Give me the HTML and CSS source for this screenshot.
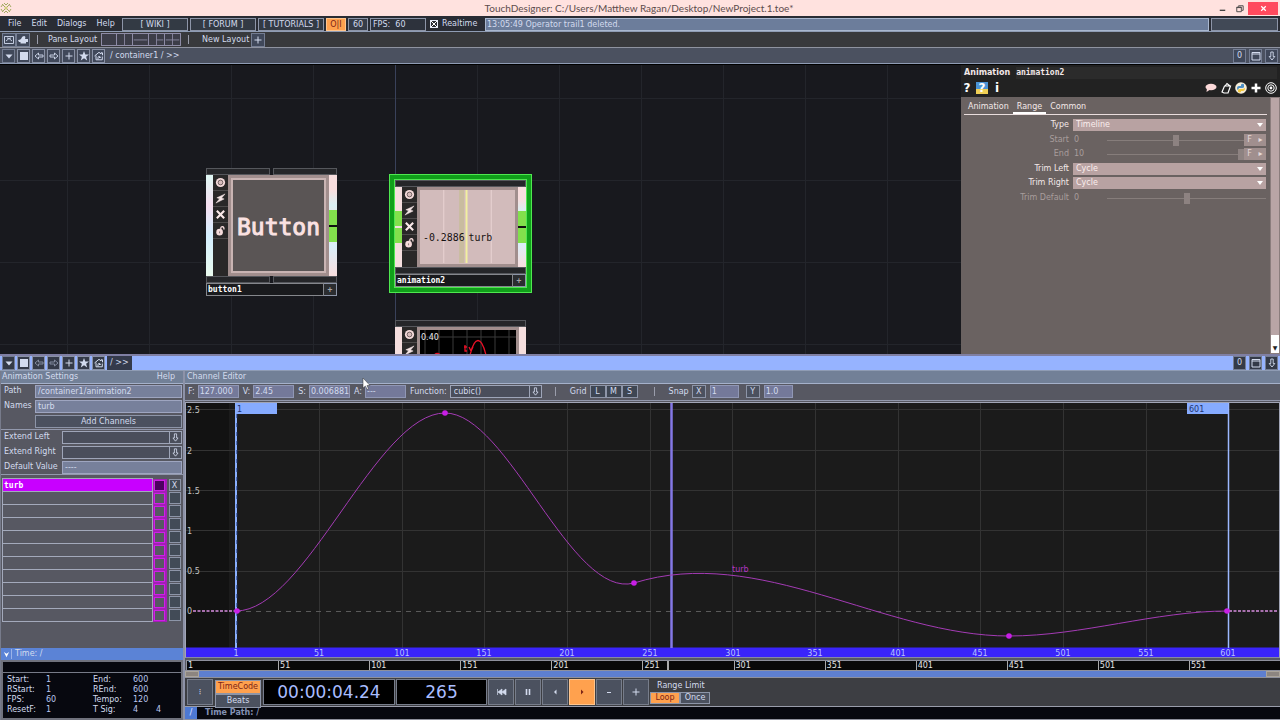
FILE: index.html
```html
<!DOCTYPE html>
<html lang="en">
<head>
    <meta charset="UTF-8">
    <meta name="viewport" content="width=device-width, initial-scale=1.0">
    <title>TouchDesigner: C:/Users/Matthew Ragan/Desktop/NewProject.1.toe*</title>
    <link rel="stylesheet" href="styles.css">
</head>
<body>
    <!-- shared icons -->
    <svg class="defs" width="0" height="0" aria-hidden="true">
        <symbol id="i-menu" viewBox="0 0 12 12"><path d="M2.500 4.500h7L6 8.500z" fill="currentColor"/></symbol>
        <symbol id="i-stop" viewBox="0 0 12 12"><path d="M2 2h8v8H2z" fill="currentColor"/></symbol>
        <symbol id="i-back" viewBox="0 0 12 12"><path d="M2 6l3.500-3v2H10v2H5.500v2z" fill="none" stroke="currentColor" stroke-width=".9"/></symbol>
        <symbol id="i-fwd" viewBox="0 0 12 12"><path d="M10 6L6.500 3v2H2v2h4.500v2z" fill="none" stroke="currentColor" stroke-width=".9"/></symbol>
        <symbol id="i-plus" viewBox="0 0 12 12"><path d="M6 2.500v7M2.500 6h7" stroke="currentColor" stroke-width="1"/></symbol>
        <symbol id="i-star" viewBox="0 0 12 12"><path d="M6 1l1.300 3.500H11L8.100 6.800 9.200 10.500 6 8.300 2.800 10.500 3.900 6.800 1 4.500h3.700z" fill="currentColor"/></symbol>
        <symbol id="i-home" viewBox="0 0 12 12"><path d="M1.500 6L6 2.300 8 4V2.800h1.500v2.500M3 5.500v4.300h6.300V6.500M5 9.500V7.500q0-1 1.200-1T7.500 7.500H6" fill="none" stroke="currentColor" stroke-width="1"/></symbol>
        <symbol id="i-max" viewBox="0 0 12 12"><path d="M2 2.500h8v7.500H2zM2 4h8" fill="none" stroke="currentColor" stroke-width="1"/></symbol>
        <symbol id="i-down" viewBox="0 0 12 12"><path d="M4.800 2h2.400v4.500h1.600L6 10 3.200 6.500h1.600z" fill="none" stroke="currentColor" stroke-width=".9"/></symbol>
        <symbol id="f-view" viewBox="0 0 12 12"><circle cx="6" cy="6" r="5" fill="#f6dcdc"/><circle cx="6" cy="6" r="2.600" fill="#d7bcbc" stroke="#4a3f3f" stroke-width=".8"/></symbol>
        <symbol id="f-cook" viewBox="0 0 12 12"><path d="M11 1L2 5.200 5 6.300 1 11 10 6.500 7.200 5.400z" fill="#f6e6e6" stroke="#f6e6e6" stroke-width=".5"/></symbol>
        <symbol id="f-bypass" viewBox="0 0 12 12"><path d="M2 2l8 8M10 2l-8 8" stroke="#fbeaea" stroke-width="2.300"/></symbol>
        <symbol id="f-lock" viewBox="0 0 12 12"><circle cx="5" cy="7.800" r="3.600" fill="#f6dcdc"/><path d="M6.300 5V3.500q.2-1.800 1.900-1.600T9.800 5" fill="none" stroke="#f6dcdc" stroke-width="1.400"/><path d="M5 7v2" stroke="#4a3f3f" stroke-width=".7"/></symbol>
    </svg>

    <header class="titlebar">
        <svg class="logo" viewBox="0 0 12 12"><path d="M2 2l3 3M10 2L7 5M2 10l3-3M10 10L7 7M1 5l2-3M9 2l2 3M1 7l2 3M9 10l2-3M4 1l2 2 2-2M4 11l2-2 2 2" stroke="#a3aa62" fill="none"/><circle cx="6" cy="6" r="1.500" fill="#d0cf7a"/></svg>
        <h1>TouchDesigner: C:/Users/Matthew Ragan/Desktop/NewProject.1.toe*</h1>
        <div class="window-buttons">
            <button aria-label="Minimize"><svg viewBox="0 0 12 12"><path d="M3 8h6" stroke="#444" stroke-width="1.500"/></svg></button>
            <button aria-label="Restore"><svg viewBox="0 0 12 12"><path d="M3 4.500h5v5H3zM3 5h5M5 4V3h5v5H8.500" fill="none" stroke="#444"/></svg></button>
            <button class="close" aria-label="Close"><svg viewBox="0 0 12 12"><path d="M3.500 3.500l5 5M8.500 3.500l-5 5" stroke="#fff" stroke-width="1.300"/></svg></button>
        </div>
    </header>

    <nav class="menubar">
        <div class="menus">
            <a href="#">File</a>
            <a href="#">Edit</a>
            <a href="#">Dialogs</a>
            <a href="#">Help</a>
        </div>
        <button class="link-btn">[ WIKI ]</button>
        <button class="link-btn">[ FORUM ]</button>
        <button class="link-btn">[ TUTORIALS ]</button>
        <button class="small-btn on">O|I</button>
        <button class="small-btn">60</button>
        <span class="fps">FPS:&nbsp; 60</span>
        <label class="realtime"><input type="checkbox" checked> Realtime</label>
        <output class="log">13:05:49 Operator trail1 deleted.</output>
        <span class="log-end"></span>
    </nav>

    <div class="layoutbar">
        <button class="icon" aria-label="Browser"><svg viewBox="0 0 12 12"><path d="M1.500 2.500h9v7h-9zM3 7l3-2.500L9 7M6 4.500L4 4M6 4.500L8 4" fill="none" stroke="currentColor" stroke-width=".9"/></svg></button>
        <button class="icon" aria-label="Render"><svg viewBox="0 0 12 12"><path d="M1 6q2 0 3-1 1-3 3-3t1 3h3v3H9v1.500H3.500V8H2z" fill="currentColor"/></svg></button>
        <span class="bar"></span>
        <span>Pane Layout</span>
        <div class="layouts">
            <button aria-label="Single"><svg viewBox="0 0 16 13"></svg></button>
            <button aria-label="Split vertical"><svg viewBox="0 0 16 13"><path d="M8 0v13"/></svg></button>
            <button aria-label="Split horizontal"><svg viewBox="0 0 16 13"><path d="M0 7h16"/></svg></button>
            <button aria-label="Split right"><svg viewBox="0 0 16 13"><path d="M8 0v13M8 7h8"/></svg></button>
            <button aria-label="Quad"><svg viewBox="0 0 16 13"><path d="M8 0v13M0 7h16"/></svg></button>
        </div>
        <span class="bar"></span>
        <span>New Layout</span>
        <button class="icon" aria-label="Add layout"><svg><use href="#i-plus"/></svg></button>
    </div>

    <div class="pathbar">
        <button class="icon" aria-label="Pane type"><svg><use href="#i-menu"/></svg></button>
        <button class="icon" aria-label="Stop"><svg><use href="#i-stop"/></svg></button>
        <button class="icon" aria-label="Back"><svg><use href="#i-back"/></svg></button>
        <button class="icon" aria-label="Forward"><svg><use href="#i-fwd"/></svg></button>
        <button class="icon" aria-label="Add"><svg><use href="#i-plus"/></svg></button>
        <button class="icon" aria-label="Bookmark"><svg><use href="#i-star"/></svg></button>
        <button class="icon" aria-label="Home"><svg><use href="#i-home"/></svg></button>
        <span class="path">/ container1 / &gt;&gt;</span>
        <div class="path-end">
            <button class="icon">0</button>
            <button class="icon" aria-label="Maximize"><svg><use href="#i-max"/></svg></button>
            <button class="icon" aria-label="Split"><svg><use href="#i-down"/></svg></button>
        </div>
    </div>

    <main class="workspace">
        <section class="network">
            <div class="node node-button">
                <div class="tabs"><i></i><i></i></div>
                <div class="node-body">
                    <div class="port"></div>
                    <div class="flags">
                        <svg><use href="#f-view"/></svg>
                        <svg><use href="#f-cook"/></svg>
                        <svg><use href="#f-bypass"/></svg>
                        <svg><use href="#f-lock"/></svg>
                    </div>
                    <div class="viewer button-viewer">Button</div>
                    <div class="port out"><i></i><i></i></div>
                </div>
                <div class="tabs"><i></i><i></i></div>
                <div class="name"><span>button1</span><button aria-label="Activate">+</button></div>
            </div>

            <div class="node node-anim selected">
                <div class="tabs"><i></i></div>
                <div class="node-body">
                    <div class="port in"><i></i><i></i></div>
                    <div class="flags">
                        <svg><use href="#f-view"/></svg>
                        <svg><use href="#f-cook"/></svg>
                        <svg><use href="#f-bypass"/></svg>
                        <svg><use href="#f-lock"/></svg>
                    </div>
                    <div class="viewer anim-viewer">
                        <svg viewBox="0 0 96 74">
                            <path d="M24 0v74M72 0v74" stroke="#ead3d3"/>
                            <path d="M42 0v74" stroke="#c4bd8e" stroke-width="5" opacity=".6"/>
                            <path d="M47 0v74" stroke="#f2f0a0" stroke-width="2"/>
                            <text x="3" y="52">-0.2886</text>
                            <text x="49" y="52">turb</text>
                        </svg>
                    </div>
                    <div class="port out"><i></i><i></i></div>
                </div>
                <div class="tabs"><i></i></div>
                <div class="name"><span>animation2</span><button aria-label="Activate">+</button></div>
            </div>

            <div class="node node-trail">
                <div class="tabs"><i></i></div>
                <div class="node-body">
                    <div class="port"></div>
                    <div class="flags">
                        <svg><use href="#f-view"/></svg>
                        <svg><use href="#f-cook"/></svg>
                        <svg><use href="#f-bypass"/></svg>
                        <svg><use href="#f-lock"/></svg>
                    </div>
                    <div class="viewer trail-viewer">
                        <svg viewBox="0 0 96 74">
                            <path d="M5 0v74M19 0v74M33 0v74M47 0v74M61 0v74M75 0v74M89 0v74M0 7h96" stroke="#3a3a3a"/>
                            <path d="M12 28Q17 19 23 28M49 30C54 4 62 4 67 30M45 15v6h2M44 17h3M49 17l2 4 2-4" fill="none" stroke="#e81026" stroke-width="1.300"/>
                            <text x="1" y="10">0.40</text>
                        </svg>
                    </div>
                    <div class="port"></div>
                </div>
            </div>
        </section>

        <aside class="params">
            <div class="params-head">
                <div class="op-title"><strong>Animation</strong><span>animation2</span></div>
                <div class="op-icons">
                    <button>?</button>
                    <button class="py-help">?</button>
                    <button>i</button>
                    <svg class="push" viewBox="0 0 12 12"><ellipse cx="6" cy="5" rx="5.500" ry="3.200" fill="#fbd9d9"/><path d="M2 6l-.5 4L6 7z" fill="#fbd9d9"/></svg>
                    <svg viewBox="0 0 12 12"><path d="M2 10L4.500 4h6l-2.500 7H4zM5 4l2-2.500 3 2.500" fill="none" stroke="#fff" stroke-width="1.200"/></svg>
                    <svg viewBox="0 0 12 12"><circle cx="6" cy="6" r="5.800" fill="#f6eeda"/><path d="M2 6q0-2 2-2h2V2.500q2-1.500 3 0V5q0 1-2 1H4L3 8Q2 8 2 6" fill="#4d8fc4"/><path d="M10 6q0 3-2 3H6v1q-2 1-3-.5V8q0-1 2-1h3z" fill="#f4c93e"/></svg>
                    <svg viewBox="0 0 12 12"><path d="M6 1.500v9M1.500 6h9" stroke="#fff" stroke-width="2.500"/></svg>
                    <svg viewBox="0 0 12 12"><circle cx="6" cy="6" r="5.300" fill="none" stroke="#fff"/><circle cx="6" cy="6" r="3.200" fill="none" stroke="#fff"/><circle cx="6" cy="6" r="1.400" fill="#fff"/></svg>
                </div>
            </div>
            <div class="params-body">
                <div class="page">
                    <div class="page-tabs">
                        <button>Animation</button>
                        <button class="current">Range</button>
                        <button>Common</button>
                    </div>
                    <div class="param">
                        <label for="type">Type</label>
                        <span class="dropdown"><select id="type"><option>Timeline</option></select></span>
                    </div>
                    <div class="param off">
                        <label for="start">Start</label>
                        <span class="value">0</span>
                        <input type="range" id="start" value="50" disabled>
                        <button disabled>F</button><button disabled>▸</button>
                    </div>
                    <div class="param off">
                        <label for="end">End</label>
                        <span class="value">10</span>
                        <input type="range" id="end" value="100" disabled>
                        <button disabled>F</button><button disabled>▸</button>
                    </div>
                    <div class="param">
                        <label for="trimleft">Trim Left</label>
                        <span class="dropdown"><select id="trimleft"><option>Cycle</option></select></span>
                    </div>
                    <div class="param">
                        <label for="trimright">Trim Right</label>
                        <span class="dropdown"><select id="trimright"><option>Cycle</option></select></span>
                    </div>
                    <div class="param off">
                        <label for="trimdefault">Trim Default</label>
                        <span class="value">0</span>
                        <input type="range" id="trimdefault" value="50" disabled>
                    </div>
                </div>
                <div class="scroll"><span>▼</span></div>
            </div>
        </aside>
    </main>

    <div class="pathbar active">
        <button class="icon" aria-label="Pane type"><svg><use href="#i-menu"/></svg></button>
        <button class="icon" aria-label="Stop"><svg><use href="#i-stop"/></svg></button>
        <button class="icon dim" aria-label="Back"><svg><use href="#i-back"/></svg></button>
        <button class="icon dim" aria-label="Forward"><svg><use href="#i-fwd"/></svg></button>
        <button class="icon" aria-label="Add"><svg><use href="#i-plus"/></svg></button>
        <button class="icon" aria-label="Bookmark"><svg><use href="#i-star"/></svg></button>
        <button class="icon" aria-label="Home"><svg><use href="#i-home"/></svg></button>
        <span class="path">/ &gt;&gt;</span>
        <div class="path-end">
            <button class="icon">0</button>
            <button class="icon" aria-label="Maximize"><svg><use href="#i-max"/></svg></button>
            <button class="icon" aria-label="Split"><svg><use href="#i-down"/></svg></button>
        </div>
    </div>

    <div class="editor">
        <section class="settings">
            <div class="panel-head"><span>Animation Settings</span><a href="#">Help</a></div>
            <div class="fields">
                <label for="path">Path</label><input id="path" value="/container1/animation2">
                <label for="names">Names</label><input id="names" value="turb">
                <button class="add">Add Channels</button>
            </div>
            <div class="fields wide">
                <label for="extl">Extend Left</label>
                <span class="pick"><select id="extl"><option></option></select><svg><use href="#i-down"/></svg></span>
                <label for="extr">Extend Right</label>
                <span class="pick"><select id="extr"><option></option></select><svg><use href="#i-down"/></svg></span>
                <label for="def">Default Value</label><input id="def" value="----">
            </div>
            <table class="channels">
                <tr class="current"><td>turb</td><td class="color"><i></i></td><td class="del"><button>X</button></td></tr>
                <tr><td></td><td class="color"><i></i></td><td class="del"><button></button></td></tr>
                <tr><td></td><td class="color"><i></i></td><td class="del"><button></button></td></tr>
                <tr><td></td><td class="color"><i></i></td><td class="del"><button></button></td></tr>
                <tr><td></td><td class="color"><i></i></td><td class="del"><button></button></td></tr>
                <tr><td></td><td class="color"><i></i></td><td class="del"><button></button></td></tr>
                <tr><td></td><td class="color"><i></i></td><td class="del"><button></button></td></tr>
                <tr><td></td><td class="color"><i></i></td><td class="del"><button></button></td></tr>
                <tr><td></td><td class="color"><i></i></td><td class="del"><button></button></td></tr>
                <tr><td></td><td class="color"><i></i></td><td class="del"><button></button></td></tr>
                <tr><td></td><td class="color"><i></i></td><td class="del"><button></button></td></tr>
            </table>
            <div class="time-head"><button aria-label="Collapse"><svg viewBox="0 0 8 8"><path d="M1 1l3 6 3-6-3 2z" fill="#fff"/></svg></button><span>Time: /</span></div>
            <div class="time-info">
                <table>
                    <tr><td>Start:</td><td>1</td><td>End:</td><td>600</td><td></td></tr>
                    <tr><td>RStart:</td><td>1</td><td>REnd:</td><td>600</td><td></td></tr>
                    <tr><td>FPS:</td><td>60</td><td>Tempo:</td><td>120</td><td></td></tr>
                    <tr><td>ResetF:</td><td>1</td><td>T Sig:</td><td>4</td><td>4</td></tr>
                </table>
            </div>
        </section>

        <section class="channel-editor">
            <div class="panel-head"><span>Channel Editor</span></div>
            <div class="tools">
                <label for="f">F:</label><input id="f" value="127.000">
                <label for="v">V:</label><input id="v" value="2.45">
                <label for="s">S:</label><input id="s" value="0.0068810">
                <label for="a">A:</label><input id="a" value="---">
                <label for="fn">Function:</label>
                <span class="pick"><select id="fn"><option>cubic()</option></select><svg><use href="#i-down"/></svg></span>
                <span class="bar"></span>
                <span>Grid</span>
                <div class="group"><button>L</button><button>M</button><button>S</button></div>
                <span class="bar"></span>
                <span>Snap</span>
                <button>X</button><input class="snap" aria-label="Snap X" value="1">
                <button>Y</button><input class="snap" aria-label="Snap Y" value="1.0">
            </div>

            <div class="graph">
                <svg viewBox="186 403 1093 254">
                    <path d="M186 403h43v245h-43z" fill="#121212"/>
                    <g class="grid">
                        <path d="M319.500 403v245M402.500 403v245M484.500 403v245M567.500 403v245M650.500 403v245M732.500 403v245M815.500 403v245M898.500 403v245M980.500 403v245M1063.500 403v245M1146.500 403v245"/>
                        <path d="M186 409.500h1093M186 450.500h1093M186 490.500h1093M186 530.500h1093M186 571.500h1093"/>
                        <path d="M236 611.500h993" stroke="#5a5a5a" stroke-dasharray="5 5"/>
                    </g>
                    <path d="M186 647.500h1093v9.500h-1093z" fill="#3a24fa"/>
                    <path d="M193 611h43M1229 611h48" stroke="#d78fe0" stroke-width="1.300" stroke-dasharray="3 1.500"/>
                    <path d="M236 403v245" stroke="#8ab0ff" stroke-width="2"/>
                    <path d="M237 414v234" stroke="#1b2f66" stroke-width="1" stroke-dasharray="4 5"/>
                    <path d="M1228.500 403v245" stroke="#9cb8ff" stroke-width="1.500"/>
                    <path d="M671.500 403v245" stroke="#8478e6" stroke-width="2.500"/>
                    <path d="M236 403h41v11h-41zM1187 403h41v11h-41z" fill="#86abff"/>
                    <path d="M236 611C306 611 376 413 445 413C508 413 571 600 634 583C759 544 884 636 1009 636C1082 636 1155 611 1228 611" fill="none" stroke="#a43bb5" stroke-width="1"/>
                    <g fill="#c81ee6">
                        <circle cx="237" cy="611" r="2.800"/><circle cx="445" cy="413" r="2.800"/><circle cx="634" cy="583" r="2.800"/><circle cx="1009" cy="636" r="2.800"/><circle cx="1227" cy="611" r="2.800"/>
                    </g>
                    <g class="ylabels">
                        <text x="187" y="413">2.5</text><text x="187" y="454">2</text><text x="187" y="494">1.5</text>
                        <text x="187" y="534">1</text><text x="187" y="574">0.5</text><text x="187" y="614">0</text>
                    </g>
                    <text class="curve-name" x="732" y="572">turb</text>
                    <text class="flag" x="237" y="412">1</text><text class="flag" x="1189" y="412">601</text>
                    <g class="xlabels">
                        <text x="236" y="656">1</text><text x="319" y="656">51</text><text x="402" y="656">101</text><text x="484" y="656">151</text>
                        <text x="567" y="656">201</text><text x="650" y="656">251</text><text x="733" y="656">301</text><text x="815" y="656">351</text>
                        <text x="898" y="656">401</text><text x="980" y="656">451</text><text x="1063" y="656">501</text><text x="1146" y="656">551</text><text x="1228" y="656">601</text>
                    </g>
                </svg>
            </div>

            <div class="ruler">
                <span>1</span><span>51</span><span>101</span><span>151</span><span>201</span><span class="playhead">251</span>
                <span>301</span><span>351</span><span>401</span><span>451</span><span>501</span><span>551</span>
            </div>
            <div class="range"><i></i><i></i></div>

            <div class="transport">
                <button class="dots">⁝</button>
                <div class="mode"><button class="on">TimeCode</button><button>Beats</button></div>
                <output class="timecode">00:00:04.24</output>
                <output class="frame">265</output>
                <button aria-label="Reset"><svg viewBox="0 0 12 12"><path d="M2.500 3v6M7 3v6L3 6zM11 3v6L7 6z" fill="currentColor" stroke="currentColor" stroke-width=".7"/></svg></button>
                <button aria-label="Pause"><svg viewBox="0 0 12 12"><path d="M4.500 3v6M7.500 3v6" stroke="currentColor" stroke-width="1.600"/></svg></button>
                <button aria-label="Play reverse"><svg viewBox="0 0 12 12"><path d="M7.500 3.500v5L5 6z" fill="currentColor"/></svg></button>
                <button class="on" aria-label="Play"><svg viewBox="0 0 12 12"><path d="M5 3.500v5L7.500 6z" fill="currentColor"/></svg></button>
                <button aria-label="Step back"><svg viewBox="0 0 12 12"><path d="M4 6.500h4" stroke="currentColor"/></svg></button>
                <button aria-label="Step forward"><svg><use href="#i-plus"/></svg></button>
                <div class="limit">
                    <span>Range Limit</span>
                    <div><button class="on">Loop</button><button>Once</button></div>
                </div>
            </div>
            <div class="time-path"><b>/</b><span>Time Path: /</span></div>
        </section>
    </div>

    <svg class="cursor" viewBox="0 0 10 14"><path d="M1 1v10l2.500-2 1.500 3.500 1.500-.7L5 8.500h3z" fill="#fff" stroke="#333" stroke-width=".5"/></svg>
</body>
</html>
```

FILE: styles.css
```css
* { box-sizing: border-box; }
body {
    margin: 0;
    height: 100vh;
    display: flex;
    flex-direction: column;
    position: relative;
    overflow: hidden;
    background: #17181d;
    color: #d3dbee;
    font-family: "DejaVu Sans", Verdana, sans-serif;
    font-size: 8px;
    line-height: 12px;
}
button, input, select {
    font: inherit;
    color: inherit;
    margin: 0;
    padding: 0;
    border: 1px solid #8d95a8;
    border-radius: 0;
    background: #4b515f;
    min-width: 0;
}
select { appearance: none; }
button { display: flex; align-items: center; justify-content: center; }
a { color: inherit; text-decoration: none; }
table { border-collapse: collapse; }
svg { display: block; }
.defs { position: absolute; }
.on { background: #ffa14e; color: #7c2416; }

/* title bar */
.titlebar {
    display: flex;
    align-items: center;
    height: 16px;
    flex: none;
    background: #ffe2df;
    color: #5c4c4c;
}
.logo { width: 12px; height: 12px; }
.titlebar h1 {
    flex: 1;
    margin: 0;
    text-align: center;
    font-family: Lato, "Open Sans", sans-serif;
    font-weight: normal;
    font-size: 10px;
    line-height: 14px;
    padding-left: 52px;
}
.window-buttons { display: flex; padding-right: 2px; }
.window-buttons button { width: 17px; height: 13px; border: 0; background: none; }
.window-buttons svg { width: 11px; height: 11px; }
.window-buttons .close { width: 30px; background: #ff4a5e; }

/* menu bar */
.menubar {
    display: flex;
    align-items: center;
    gap: 2px;
    height: 16px;
    flex: none;
    padding: 1px 2px 0 0;
    background: #292c34;
    border-bottom: 1px solid #8f9cb4;
}
.menus { display: flex; gap: 10px; width: 120px; padding-left: 8px; }
.menubar button, .fps, .log, .log-end { height: 13px; line-height: 11px; }
.link-btn { width: 66px; background: #333a44; }
.small-btn { width: 20px; background: #363c48; }
.small-btn.on { background: #ffa14e; border-color: #ffc58e; }
.fps { width: 56px; border: 1px solid #8d95a8; padding-left: 2px; background: #2d323c; }
.realtime { display: flex; align-items: center; gap: 4px; width: 55px; padding-left: 2px; }
.realtime input {
    appearance: none;
    width: 8px;
    height: 8px;
    border: 1px solid #e6ecfa;
    background: linear-gradient(45deg, transparent 42%, #fff 42% 58%, transparent 58%), linear-gradient(-45deg, transparent 42%, #fff 42% 58%, transparent 58%);
}
.log { flex: 1; border: 1px solid #a9b7cf; background: #6c7d9b; padding-left: 1px; }
.log-end { width: 67px; border: 1px solid #8d95a8; background: #414956; }

/* pane layout bar */
.layoutbar {
    display: flex;
    align-items: center;
    height: 16px;
    flex: none;
    padding-left: 2px;
    background: #38393c;
    border-bottom: 1px solid #8f93a0;
}
.icon {
    width: 14px;
    height: 14px;
    flex: none;
    background: #40485a;
    border-color: #747d92;
}
.icon svg { width: 12px; height: 12px; flex: none; }
.bar { width: 1px; height: 9px; background: #9a9dab; margin: 0 10px 0 7px; }
.layouts { display: flex; margin-left: 4px; }
.layouts button { width: 16px; height: 13px; background: #3c3d48; border-color: #8e8ca6; }
.layouts button + button { border-left: 0; }
.layouts svg { width: 100%; height: 100%; }
.layouts path { stroke: #8e8ca6; fill: none; }
.layoutbar .icon:last-child { margin-left: 2px; }
.layouts + .bar { margin-right: 13px; }

/* path bars */
.pathbar {
    display: flex;
    align-items: center;
    gap: 2px;
    height: 16px;
    flex: none;
    padding: 0 2px;
    background: #4b5160;
    border-bottom: 1px solid #8f9cb4;
}
.pathbar .icon { width: 13px; }
.pathbar > .icon:nth-child(n + 2) { border-color: #8991a5; }
.path { padding: 1px 3px; }
.path-end { display: flex; gap: 3px; margin-left: auto; }
.pathbar.active {
    height: 17px;
    background: #96b3ff;
    border-top: 2px solid #7f7fa3;
}
.active .icon { background: #343a48; }
.active .icon.dim { color: #8b93a8; }
.active .path { background: #343a4b; }

/* network */
.workspace { flex: 1; min-height: 0; display: flex; border-top: 1px solid #000; }
.network {
    flex: 1;
    position: relative;
    overflow: hidden;
    background-color: #18191e;
    background-image:
        linear-gradient(90deg, #39415a 1px, transparent 1px),
        linear-gradient(90deg, #23252b 1px, transparent 1px),
        linear-gradient(#23252b 1px, transparent 1px);
    background-size: 1000px 100%, 82px 100%, 100% 82px;
    background-position: 395px 0, 67px 0, 0 33px;
}
.node { position: absolute; width: 131px; }
.node-button { left: 206px; top: 103px; }
.node-anim { left: 395px; top: 115px; }
.node-trail { left: 395px; top: 255px; }
.selected { outline: 1px solid #4fe850; outline-offset: 5px; box-shadow: 0 0 0 1px #4fe850, 0 0 0 5px #10a01a; background: #1c241e; }
.tabs { display: flex; gap: 3px; height: 7px; }
.tabs i { flex: 1; background: #252629; border: 1px solid #55575c; }
.node-body { display: flex; height: 101px; }
.node-anim .node-body, .node-trail .node-body { height: 80px; }
.port { width: 7px; background: linear-gradient(#dff8f4, #f5dff0 30%, #d5efff 60%, #e9fbee); }
.node-anim .port, .node-trail .port { background: #f4dede; }
.port.in, .port.out { display: flex; flex-direction: column; justify-content: center; gap: 2px; }
.node .port.out { width: 8px; background: linear-gradient(#f8dede 15%, #d9eff2 30%, #f8dede 48%, #111 48%, #111 52%, #f8dede 52%, #d9effa 70%, #f8dede); }
.port i { height: 15px; background: #82e04c; }
.flags { width: 15px; background: #292828; display: flex; flex-direction: column; }
.flags svg { width: 15px; height: 16px; padding: 2px; border-bottom: 1px solid #4c4a4a; }
.viewer { flex: 1; border: 3px solid #a18e8d; overflow: hidden; }
.viewer svg { width: 100%; }
.viewer text { font-family: "DejaVu Sans Mono", monospace; font-size: 10px; fill: #171212; }
.button-viewer {
    display: flex;
    align-items: center;
    justify-content: center;
    padding-top: 2px;
    background: #5a5555;
    outline: 2px solid #c9b4b3;
    outline-offset: -5px;
    color: #fbe2e2;
    font-family: "DejaVu Sans Mono", monospace;
    font-size: 23px;
    -webkit-text-stroke: 1px #fbe2e2;
}
.anim-viewer { background: #d2bbbb; }
.trail-viewer { background: #000; }
.trail-viewer text { fill: #e8e8e8; font-size: 8px; font-family: "DejaVu Sans", sans-serif; }
.name { display: flex; height: 13px; font: bold 8px/11px "DejaVu Sans Mono", monospace; color: #fff; }
.name span { flex: 1; background: #191a1d; border: 1px solid #85878c; padding-left: 1px; }
.name button { width: 13px; background: #2b2d30; color: #a5a5a5; border-left: 0; }

/* parameters */
.params { width: 319px; display: flex; flex-direction: column; background: #6a6261; color: #f3e8e8; }
.params-head { background: #222; padding-bottom: 2px; }
.op-title { display: flex; gap: 6px; padding: 2px 3px; }
.op-title span { flex: 1; font: bold 8px/12px "DejaVu Sans Mono", monospace; background: #2b2b2b; }
.op-icons { display: flex; align-items: center; gap: 3px; height: 14px; padding: 0 3px 0 0; }
.op-icons svg { width: 12px; height: 12px; }
.op-icons button { width: 12px; height: 12px; border: 0; background: none; color: #fff; font-size: 12px; font-weight: bold; }
.op-icons .py-help { background: linear-gradient(#4b93d4 55%, #f0cf55 55%); }
.push { margin-left: auto; }
.params-body { flex: 1; display: flex; }
.page { flex: 1; padding: 3px 3px 0 3px; }
.page-tabs { display: flex; border-bottom: 1px solid #e9dddd; margin-bottom: 4px; }
.page-tabs button { height: 14px; border: 0; padding: 1px 4px 0; background: none; border-bottom: 2px solid transparent; }
.page-tabs .current { border-color: #fff; }
.param { display: flex; align-items: center; height: 12px; margin-bottom: 3px; margin-right: 1px; }
.param:nth-child(odd) { margin-bottom: 2px; }
.param label { width: 105px; text-align: right; margin-right: 4px; }
.param.off { color: #a89d9c; }
.dropdown { flex: 1; display: flex; position: relative; }
.dropdown select { flex: 1; height: 12px; padding-left: 3px; border: 0; background: #b8a2a2; color: #fbeeee; }
.dropdown::after {
    content: "";
    position: absolute;
    right: 3px;
    top: 4px;
    border: 3px solid transparent;
    border-top: 4px solid #fff;
    border-bottom: 0;
}
.value { width: 34px; padding-left: 1px; }
.param input { flex: 1; appearance: none; height: 12px; border: 0; background: linear-gradient(#867d7b, #867d7b) center / 100% 1px no-repeat; }
.param input::-webkit-slider-thumb { appearance: none; width: 6px; height: 11px; background: #8d8281; }
.param button { width: 11px; height: 12px; border: 0; background: #a08f8e; color: #e3d7d7; }
.scroll { width: 10px; background: #b9a5a6; border: 1px solid #8b7d7d; display: flex; align-items: flex-end; }
.scroll span { background: #fff; color: #222; width: 8px; height: 18px; line-height: 26px; font-size: 6px; text-align: center; }

/* animation editor */
.editor { display: grid; grid-template-columns: 185px 1fr; flex: none; background: #575862; }
.panel-head {
    display: flex;
    justify-content: space-between;
    height: 13px;
    padding: 0 8px 0 2px;
    background: #728097;
    border-bottom: 1px solid #a5b1ca;
}
.settings { display: flex; flex-direction: column; border-right: 2px solid #8d92a8; border-left: 1px solid #777b8b; }
.settings .panel-head { padding-left: 1px; }
.fields {
    display: grid;
    grid-template-columns: 32px 1fr;
    row-gap: 2px;
    padding: 1px 1px 1px 2px;
    border-bottom: 1px solid #9298ac;
}
.fields.wide { grid-template-columns: 59px 1fr; padding-top: 1px; padding-bottom: 0; }
.fields label { height: 13px; padding-left: 1px; white-space: nowrap; }
.fields input { height: 13px; padding-left: 2px; background: #77809b; border-color: #9ea5c0; width: 100%; }
.add { grid-column: 2; height: 13px; }
.pick { display: flex; height: 13px; position: relative; }
.pick select { flex: 1; background: #4a4e5b; border-color: #9ea5b8; }
.pick svg { width: 12px; height: 13px; border-left: 1px solid #9ea5b8; position: absolute; right: 1px; top: 0; }
.channels { margin: 3px 3px 0 1px; width: 179px; }
.channels td { padding: 0; border: 1px solid #a3a9bb; height: 13px; line-height: 11px; }
.channels .current td:first-child { background: #c800ff; color: #fff; font: bold 8px/11px "DejaVu Sans Mono", monospace; padding-left: 1px; }
.channels .color { width: 13px; border: 0; background: #a31fb5; }
.color i { display: block; width: 11px; height: 11px; margin: 0 1px; border: 1px solid #d01fe8; background: #575862; }
.channels .current .color i { background: #4c0060; }
.channels .del { width: 14px; border: 0; padding-left: 2px; }
.del button { width: 12px; height: 12px; background: #424b57; }
.time-head { display: flex; align-items: center; margin-top: auto; height: 12px; background: #5b83d6; }
.time-head button { width: 11px; height: 10px; border: 0; border-right: 1px solid #9ab2e8; background: none; }
.time-head svg { width: 7px; height: 7px; }
.time-head span { padding-left: 3px; }
.time-info { border: 2px solid #70727d; background: #07080f; padding: 10px 0 3px; }
.time-info table { width: 100%; border-top: 1px solid #777b88; line-height: 10px; }
.time-info td { padding: 0; height: 10px; color: #b9c6ee; }
.time-info tr:first-child td { padding-top: 2px; }
.time-info td:nth-child(1) { padding-left: 4px; width: 43px; color: #d3dbee; }
.time-info td:nth-child(2) { width: 47px; }
.time-info td:nth-child(3) { width: 40px; color: #d3dbee; }
.time-info td:nth-child(4) { width: 23px; }

.channel-editor { min-width: 0; }
.tools { display: flex; align-items: center; height: 17px; padding: 0 0 1px 3px; border-bottom: 1px solid #9298ac; white-space: nowrap; }
.tools label { margin-right: 3px; }
.tools input { width: 41px; height: 13px; padding-left: 1px; margin-right: 4px; background: #74799a; border-color: #9097b5; }
.tools .pick { width: 92px; margin-right: 13px; }
.tools .pick select { padding-left: 3px; }
.tools .bar { margin: 0 14px 0 0; }
.tools > button { width: 14px; height: 13px; margin: 0 4px 0 3px; }
.tools .snap { width: 29px; }
.group { display: flex; margin: 0 16px 0 3px; }
.group button { width: 16px; height: 13px; background: #3e4653; }
.graph { margin: 1px 0 2px; border: 1px solid #a1a5b6; border-bottom: 1px solid #8687a5; background: #1b1b1b; }
.graph svg { width: 100%; }
.graph text { font-size: 8px; }
.grid { fill: none; stroke: #333; }
.ylabels { fill: #c4c4c4; }
.xlabels { fill: #b9c2ff; text-anchor: middle; }
.curve-name { fill: #b436c6; }
.graph .flag { fill: #1e3570; }
.ruler { display: grid; grid-template-columns: repeat(12, 1fr); height: 10px; margin: 0 0 0 1px; background: #090909; border: 1px solid #8e909c; border-right: 0; border-bottom: 0; }
.ruler span { position: relative; border-left: 1px solid #aaa; padding-left: 1px; line-height: 9px; color: #e4e4e4; }
.ruler span:first-child { border-left: 0; }
.ruler .playhead::after { content: ""; position: absolute; left: 24px; top: 0; width: 2px; height: 9px; background: #aaa; }
.range { display: flex; justify-content: space-between; height: 8px; border: 1px solid #8e909c; border-width: 1px 0; background: #5e7fd0; }
.range i { width: 14px; background: #8c8580; border: 1px solid #aaa49a; }
.transport { display: flex; height: 29px; gap: 1px; padding: 1px 0 1px 2px; background: #3d3e43; border-bottom: 1px solid #9a9dab; }
.transport > button { width: 26px; height: 26px; border-color: #777d8b; }
.transport > button.on { border-color: #ffc58e; }
.transport > button svg { width: 12px; height: 12px; }
.mode { display: flex; flex-direction: column; width: 48px; padding: 1px; }
.mode button { flex: 1; }
.transport output { background: #000; border: 1px solid #777d8b; color: #a9bdff; font-size: 17px; line-height: 25px; text-align: center; }
.timecode { width: 132px; }
.frame { width: 91px; }
.limit span { display: block; line-height: 13px; padding-left: 7px; }
.limit div { display: flex; }
.limit button { width: 30px; height: 12px; }
.time-path { display: flex; gap: 8px; background: #07080f; color: #8391b4; font-weight: bold; line-height: 12px; border-bottom: 1px solid #8e909c; }
.time-path b { width: 12px; text-align: center; background: #4d78d2; color: #c7d6ff; }

.cursor { position: absolute; left: 362px; top: 377px; width: 10px; height: 14px; }
```
